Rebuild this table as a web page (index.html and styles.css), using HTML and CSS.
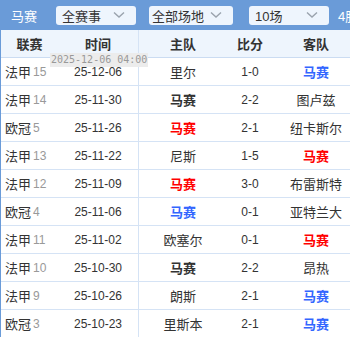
FILE: index.html
```html
<!DOCTYPE html>
<html lang="zh">
<head>
<meta charset="utf-8">
<link rel="stylesheet" href="styles.css">
</head>
<body>
<div class="page">
  <div class="topbar">
    <span class="title">马赛</span>
    <div class="select s1"><span>全赛事</span><svg class="chev" viewBox="0 0 12 8" width="12" height="8"><path d="M1 1.5 L6 6 L11 1.5" fill="none" stroke="#9aa3ad" stroke-width="1.4"/></svg></div>
    <div class="select s2"><span>全部场地</span><svg class="chev" viewBox="0 0 12 8" width="12" height="8"><path d="M1 1.5 L6 6 L11 1.5" fill="none" stroke="#9aa3ad" stroke-width="1.4"/></svg></div>
    <div class="select s3"><span>10场</span><svg class="chev" viewBox="0 0 12 8" width="12" height="8"><path d="M1 1.5 L6 6 L11 1.5" fill="none" stroke="#9aa3ad" stroke-width="1.4"/></svg></div>
    <span class="summary">4胜</span>
  </div>
  <div class="table">
    <div class="row head">
      <div class="c league">联赛</div>
      <div class="c time">时间</div>
      <div class="c">主队</div>
      <div class="c">比分</div>
      <div class="c">客队</div>
    </div>
    <div class="row">
      <div class="c lg">法甲<span class="rd">15</span></div>
      <div class="c time num">25-12-06</div>
      <div class="c">里尔</div>
      <div class="c num">1-0</div>
      <div class="c"><b class="lose">马赛</b></div>
    </div>
    <div class="row">
      <div class="c lg">法甲<span class="rd">14</span></div>
      <div class="c time num">25-11-30</div>
      <div class="c"><b class="draw">马赛</b></div>
      <div class="c num">2-2</div>
      <div class="c">图卢兹</div>
    </div>
    <div class="row">
      <div class="c lg">欧冠<span class="rd">5</span></div>
      <div class="c time num">25-11-26</div>
      <div class="c"><b class="win">马赛</b></div>
      <div class="c num">2-1</div>
      <div class="c">纽卡斯尔</div>
    </div>
    <div class="row">
      <div class="c lg">法甲<span class="rd">13</span></div>
      <div class="c time num">25-11-22</div>
      <div class="c">尼斯</div>
      <div class="c num">1-5</div>
      <div class="c"><b class="win">马赛</b></div>
    </div>
    <div class="row">
      <div class="c lg">法甲<span class="rd">12</span></div>
      <div class="c time num">25-11-09</div>
      <div class="c"><b class="win">马赛</b></div>
      <div class="c num">3-0</div>
      <div class="c">布雷斯特</div>
    </div>
    <div class="row">
      <div class="c lg">欧冠<span class="rd">4</span></div>
      <div class="c time num">25-11-06</div>
      <div class="c"><b class="lose">马赛</b></div>
      <div class="c num">0-1</div>
      <div class="c">亚特兰大</div>
    </div>
    <div class="row">
      <div class="c lg">法甲<span class="rd">11</span></div>
      <div class="c time num">25-11-02</div>
      <div class="c">欧塞尔</div>
      <div class="c num">0-1</div>
      <div class="c"><b class="win">马赛</b></div>
    </div>
    <div class="row">
      <div class="c lg">法甲<span class="rd">10</span></div>
      <div class="c time num">25-10-30</div>
      <div class="c"><b class="draw">马赛</b></div>
      <div class="c num">2-2</div>
      <div class="c">昂热</div>
    </div>
    <div class="row">
      <div class="c lg">法甲<span class="rd">9</span></div>
      <div class="c time num">25-10-26</div>
      <div class="c">朗斯</div>
      <div class="c num">2-1</div>
      <div class="c"><b class="lose">马赛</b></div>
    </div>
    <div class="row">
      <div class="c lg">欧冠<span class="rd">3</span></div>
      <div class="c time num">25-10-23</div>
      <div class="c">里斯本</div>
      <div class="c num">2-1</div>
      <div class="c"><b class="lose">马赛</b></div>
    </div>
    <div class="tooltip">2025-12-06 04:00</div>
  </div>
</div>
</body>
</html>
```
FILE: styles.css
```css
html, body {
  margin: 0;
  padding: 0;
  background: #fff;
  overflow: hidden;
}
.page {
  width: 360px;
  font-family: "Liberation Sans", "Noto Sans CJK SC", sans-serif;
  font-size: 13px;
  color: #333;
}
.topbar {
  height: 30px;
  background: #6a9bd8;
  display: flex;
  align-items: center;
  white-space: nowrap;
}
.topbar > * { flex-shrink: 0; }
.title {
  color: #fff;
  font-size: 13px;
  margin-left: 11px;
  width: 45px;
}
.select {
  height: 19px;
  background: #eef5fd;
  border-radius: 3px;
  display: flex;
  align-items: center;
  justify-content: space-between;
  padding: 0 11px 0 6px;
  box-sizing: border-box;
  font-size: 13px;
  color: #333;
}
.s1 { width: 80px; }
.s2 { width: 84px; margin-left: 13px; padding-left: 3px; }
.s3 { width: 80px; margin-left: 16px; }
.chev { display: block; }
.summary {
  color: #fff;
  margin-left: 9px;
  font-size: 13px;
}
.table {
  position: relative;
  border-left: 1px solid #6a9bd8;
}
.row {
  display: grid;
  grid-template-columns: 57px 81px 88px 46px 86px;
  height: 28px;
  box-sizing: border-box;
  border-bottom: 1px solid #d5e3f5;
  align-items: stretch;
}
.row.head {
  background: #eef5fd;
  font-weight: bold;
  border-bottom: 1px solid #cbdcf2;
}
.c {
  display: flex;
  align-items: center;
  justify-content: center;
  white-space: nowrap;
}
.c.time {
  border-right: 1px solid #d5e3f5;
}
.c.lg {
  justify-content: flex-start;
  padding-left: 4px;
}
.rd {
  color: #999;
  font-size: 12px;
  margin-left: 2px;
}
.num {
  font-size: 12px;
}
b { font-weight: bold; }
.win { color: #ff0000; }
.lose { color: #3366ff; }
.draw { color: #333; }
.tooltip {
  position: absolute;
  left: 49px;
  top: 23px;
  height: 14px;
  padding: 0 1px;
  background: #ececec;
  color: #999;
  font-family: "DejaVu Sans Mono", monospace;
  font-size: 10px;
  line-height: 14px;
  white-space: nowrap;
}
```
